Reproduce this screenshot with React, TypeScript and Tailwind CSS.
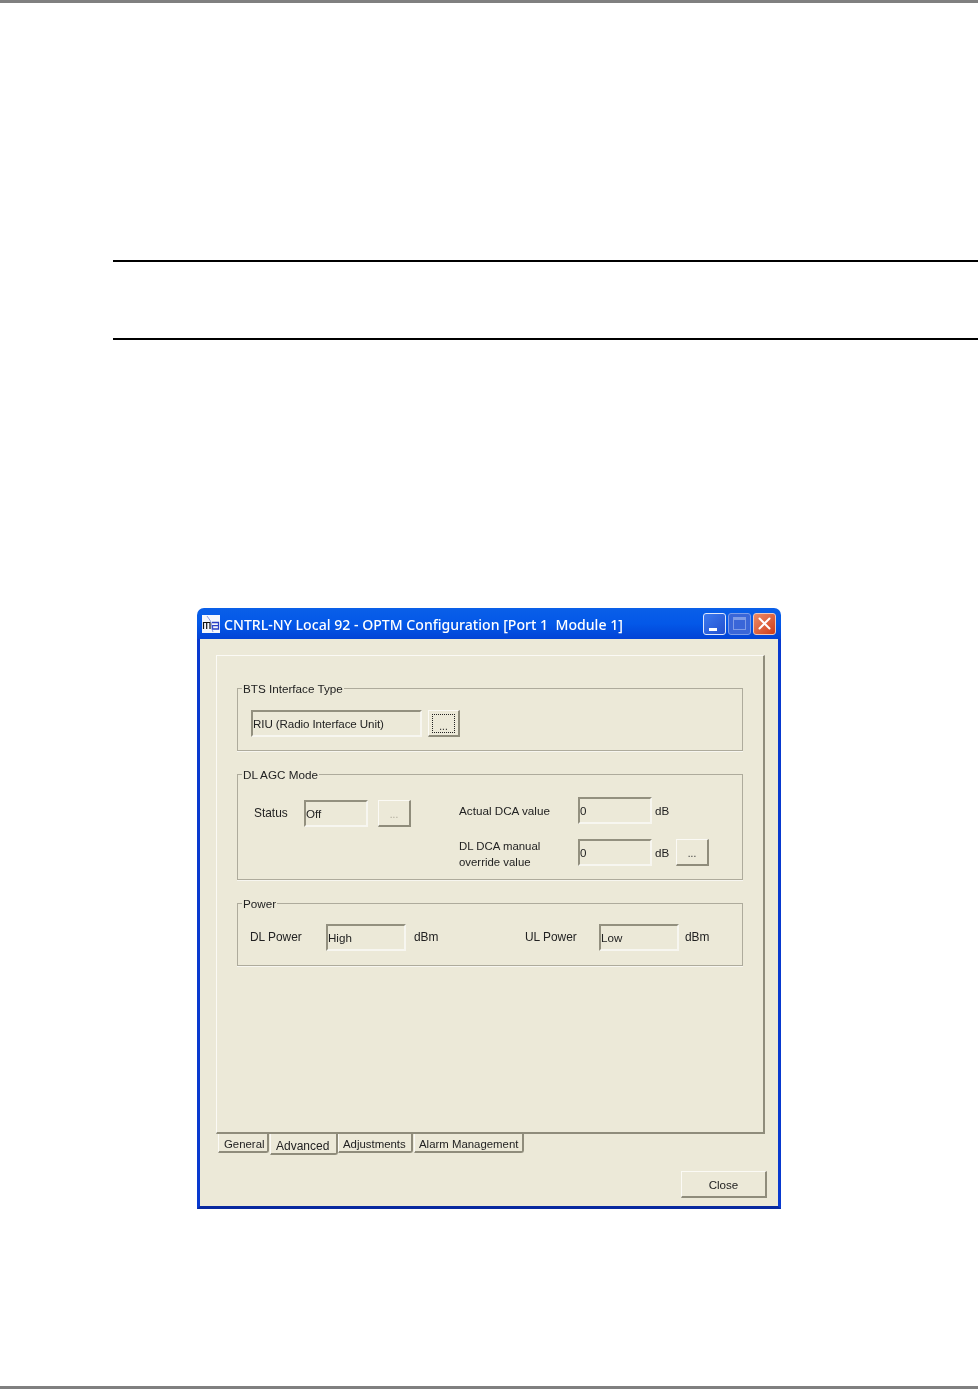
import React from "react";

const sunken =
  "flex items-center h-[27px] border-2 border-t-[#93907f] border-l-[#93907f] border-b-[#f7f6f0] border-r-[#f7f6f0] pt-px text-[11.6px] leading-none";
const raised =
  "flex items-center justify-center border border-t-[#fbfaf5] border-l-[#fbfaf5] border-r-[#8f8c7b] border-b-[#8f8c7b] border-r-2 border-b-2 bg-[#ece9d8] text-[11.6px]";

function Field({ value, width, small }: { value: string; width: string; small?: boolean }) {
  return <div className={`${sunken} ${width} ${small ? "tracking-[-0.1px]" : ""}`}>{value}</div>;
}

function Dots({ disabled }: { disabled?: boolean }) {
  return (
    <div className={`${raised} w-[33px] h-[27px] shrink-0 ${disabled ? "text-[#aca899]" : "text-[#333]"}`}>
      <span className="text-[10px] leading-none mt-[3px]">...</span>
    </div>
  );
}

function Group({ title, height, children }: { title: string; height: string; children: React.ReactNode }) {
  return (
    <fieldset className={`border border-[#aeab9c] ${height} shadow-[0_1px_0_#f7f6f0]`}>
      <legend className="ml-[4px] px-px text-[11.7px] leading-[14px] whitespace-nowrap">
        <span className="block translate-y-px">{title}</span>
      </legend>
      {children}
    </fieldset>
  );
}

function MaLogo() {
  return (
    <svg width="18" height="18" viewBox="0 0 18 18" className="shrink-0">
      <rect width="18" height="18" fill="#f4f6fc" />
      <path d="M1.5 14V7.5h6.5V14M4.7 7.5V14" fill="none" stroke="#111" strokeWidth="1.2" />
      <path d="M10 7.5h6.5V14h-6V10.6h6" fill="none" stroke="#2a3fc4" strokeWidth="1.3" />
      <path d="M5 1c2 3 4 5 4.5 8s.5 6 1.5 8" fill="none" stroke="#5a6fd8" strokeWidth="0.7" />
    </svg>
  );
}

function TitleButtons() {
  return (
    <div className="flex items-center gap-[2px] mr-[5px]">
      <div className="flex w-[23px] h-[22px] items-end rounded-[3px] border border-[#dfe8fb] bg-gradient-to-br from-[#3d79ee] to-[#2350cf] pb-[3px] pl-[5px]">
        <div className="w-[8px] h-[3px] bg-white" />
      </div>
      <div className="flex w-[23px] h-[22px] items-center justify-center rounded-[3px] border border-[#7c9be8] bg-[#3a66d8]">
        <div className="w-[13px] h-[13px] border border-[#7e9be6] border-t-[3px]" />
      </div>
      <div className="flex w-[23px] h-[22px] items-center justify-center rounded-[3px] border border-[#f0c9bb] bg-gradient-to-br from-[#ec8a66] to-[#cf3a14]">
        <svg width="13" height="13" viewBox="0 0 13 13">
          <path d="M1.5 1.5l10 10M11.5 1.5l-10 10" stroke="#fff" strokeWidth="2" strokeLinecap="round" />
        </svg>
      </div>
    </div>
  );
}

function Tab({ label, width, active }: { label: string; width: string; active?: boolean }) {
  return (
    <div
      className={`${width} ${active ? "h-[21px] pt-[5px] pl-[5px] text-[12px]" : "h-[19px] pt-[3px] pl-[4px] text-[11.4px]"} leading-[14px] whitespace-nowrap border-l border-l-[#fbfaf5] border-r-2 border-b-2 border-r-[#8f8c7b] border-b-[#8f8c7b] rounded-br-[3px]`}
    >
      {label}
    </div>
  );
}

export default function App() {
  return (
    <div className="w-[978px] h-[1389px] flex flex-col bg-white font-['Liberation_Sans',Arial,sans-serif] text-[#222] overflow-hidden">
      <div className="h-[3px] bg-[#808080] shrink-0" />
      {/* note rules */}
      <div className="mt-[257px] ml-[113px] h-[80px] border-y-2 border-black shrink-0" />

      {/* XP dialog */}
      <div className="mt-[268px] ml-[197px] w-[584px] h-[601px] shrink-0 flex flex-col blur-[0.35px]">
        <div className="h-[31px] shrink-0 flex items-center pl-[5px] rounded-t-[7px] bg-gradient-to-b from-[#0a5fe8] via-[#0458e8] to-[#0343d6]">
          <MaLogo />
          <span className="ml-[4px] mt-[3px] flex-1 text-white text-[14.1px] font-medium whitespace-pre font-['Noto_Sans',sans-serif] leading-none">
            CNTRL-NY Local 92 - OPTM Configuration [Port 1  Module 1]
          </span>
          <TitleButtons />
        </div>

        <div className="flex-1 flex flex-col bg-[#ece9d8] border-x-[3px] border-b-[3px] border-x-[#0839cf] border-b-[#08299f] pt-4 pl-4 pr-[13px]">
          <div className="h-[479px] shrink-0 border-l border-t border-l-[#fbfaf5] border-t-[#fbfaf5] border-r-2 border-b-2 border-r-[#8f8c7b] border-b-[#8f8c7b] pt-[25px] pl-5 pr-[20px] flex flex-col gap-4">
            <Group title="BTS Interface Type" height="h-[70px]">
              <div className="flex pt-[15px] pl-[13px] gap-[6px]">
                <Field value="RIU (Radio Interface Unit)" width="w-[171px]" small />
                <div className={`${raised} w-[32px] h-[27px]`}>
                  <div className="w-[23px] h-[19px] border border-dotted border-[#222] flex items-end justify-center text-[10px] leading-[10px]">
                    ...
                  </div>
                </div>
              </div>
            </Group>

            <Group title="DL AGC Mode" height="h-[113px]">
              <div className="flex pl-4">
                <div className="flex items-center mt-[19px] h-[27px]">
                  <span className="w-[50px] pt-px text-[11.9px]">Status</span>
                  <Field value="Off" width="w-[64px]" />
                  <div className="ml-[10px]">
                    <Dots disabled />
                  </div>
                </div>
                <div className="ml-[48px] mt-4 flex flex-col gap-[15px]">
                  <div className="flex items-center h-[27px]">
                    <span className="w-[119px] text-[11.7px]">Actual DCA value</span>
                    <Field value="0" width="w-[74px]" />
                    <span className="ml-[3px] text-[11.6px]">dB</span>
                  </div>
                  <div className="flex items-center h-[27px]">
                    <span className="w-[119px] text-[11.4px] leading-4 mt-[2px]">
                      DL DCA manual
                      <br />
                      override value
                    </span>
                    <Field value="0" width="w-[74px]" />
                    <span className="ml-[3px] w-[21px] text-[11.6px]">dB</span>
                    <Dots />
                  </div>
                </div>
              </div>
            </Group>

            <Group title="Power" height="h-[70px]">
              <div className="flex items-center pt-[14px] pl-3 text-[11.9px]">
                <span className="w-[76px] pt-px">DL Power</span>
                <Field value="High" width="w-[80px]" />
                <span className="ml-2 w-[111px] pt-px">dBm</span>
                <span className="w-[74px] pt-px">UL Power</span>
                <Field value="Low" width="w-[80px]" />
                <span className="ml-[6px] pt-px">dBm</span>
              </div>
            </Group>
          </div>

          <div className="flex pl-[2px] items-start">
            <Tab label="General" width="w-[51px] mr-px pl-[5px]" />
            <Tab label="Advanced" width="w-[68px]" active />
            <Tab label="Adjustments" width="w-[75px] mr-px" />
            <Tab label="Alarm Management" width="w-[110px]" />
          </div>

          <div className={`${raised} self-end mt-4 mr-[-2px] w-[86px] h-[27px] pt-[2px]`}>Close</div>
        </div>
      </div>

      <div className="mt-auto h-[3px] bg-[#808080] shrink-0" />
    </div>
  );
}
